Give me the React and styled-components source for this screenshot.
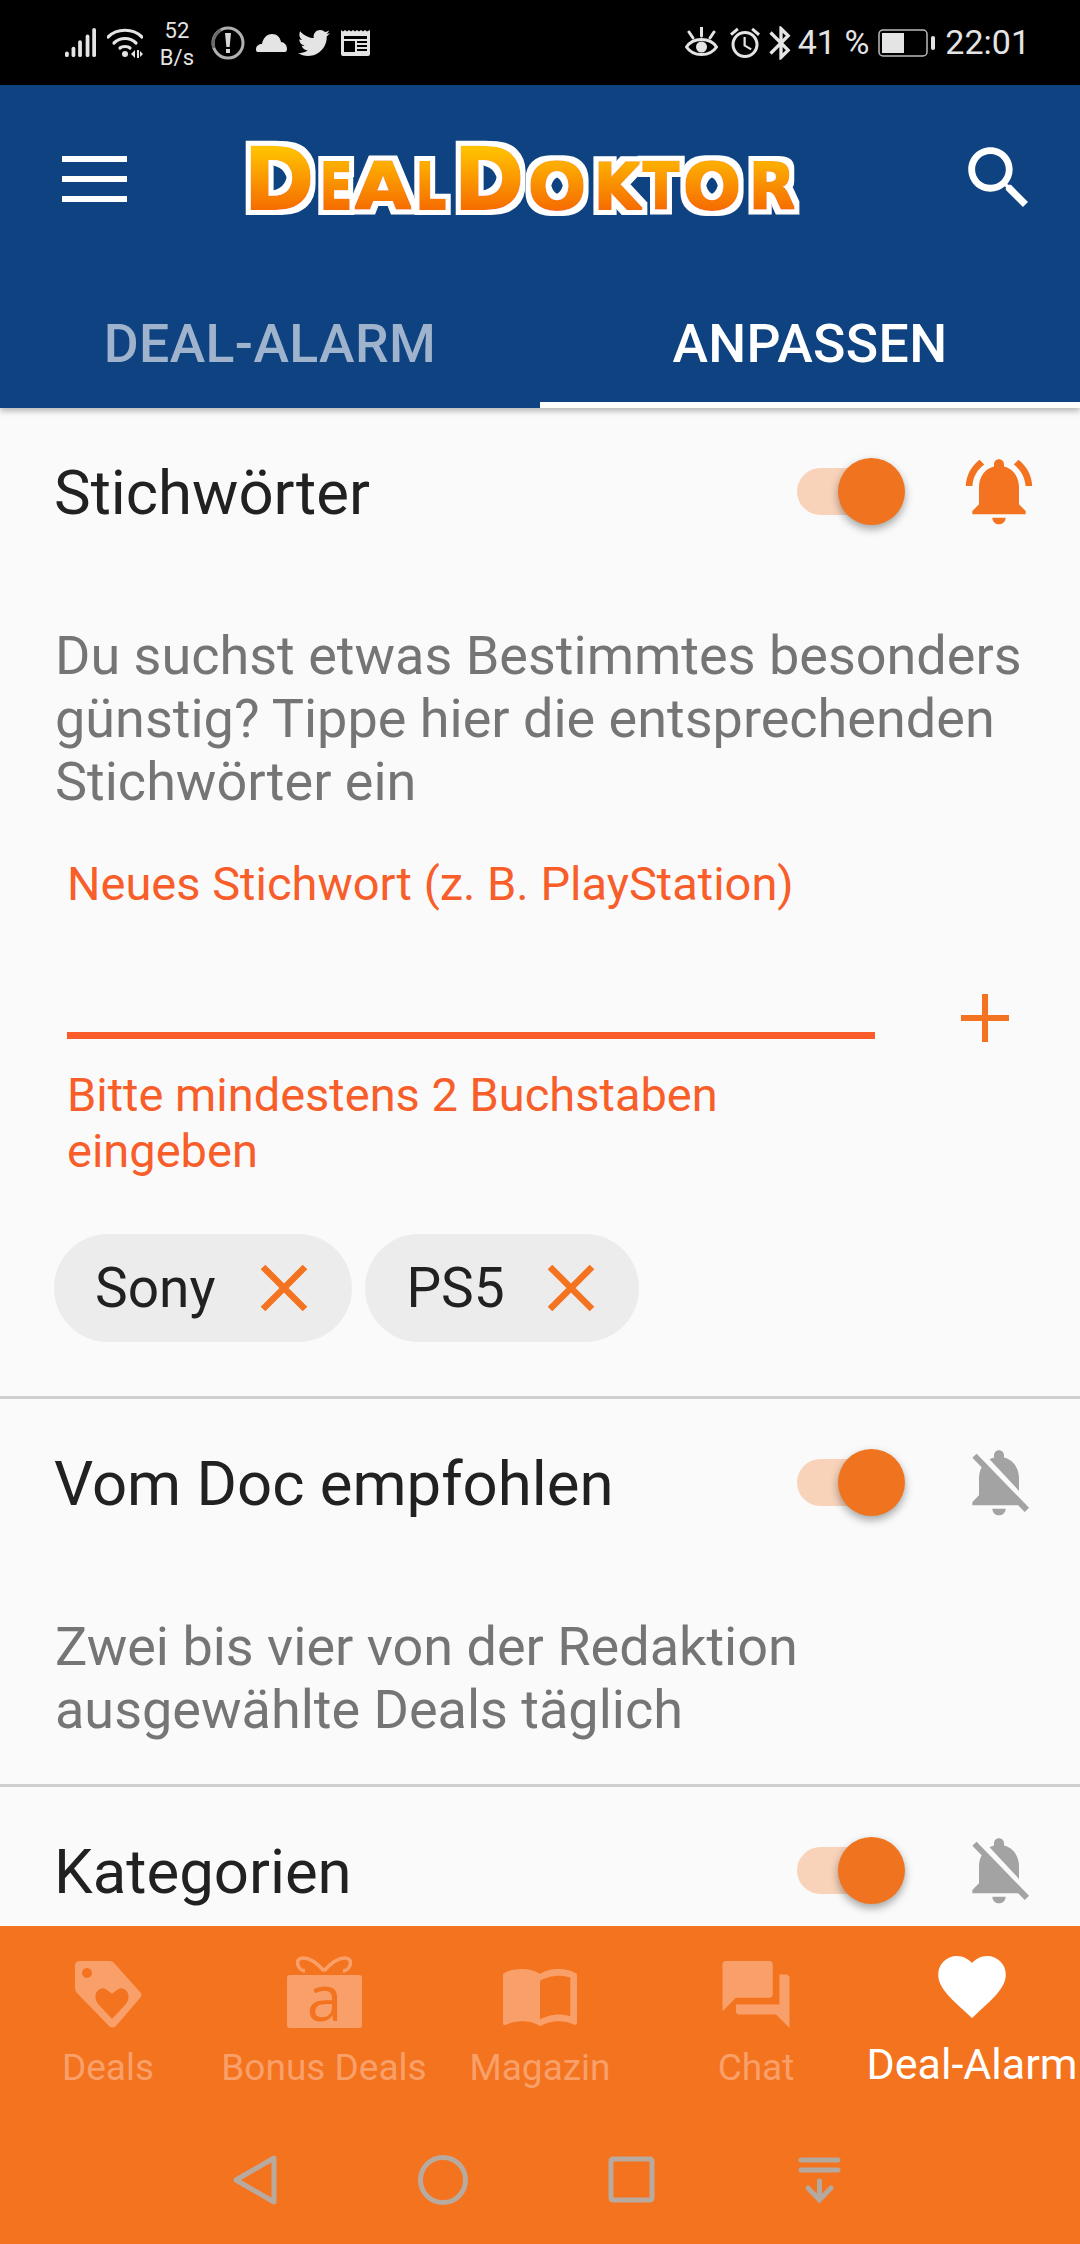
import React from 'react';
import styled, { createGlobalStyle } from 'styled-components';
import { MdAccessAlarm, MdBluetooth } from 'react-icons/md';
import { FaTwitter } from 'react-icons/fa';

const Global = createGlobalStyle`
  html, body { margin: 0; padding: 0; background: #fafafa; }
  body { font-family: Roboto, "Liberation Sans", sans-serif; }
  * { box-sizing: border-box; }
`;

const Phone = styled.div`
  width: 1080px; height: 2244px; display: flex; flex-direction: column; overflow: hidden; background: #fafafa;
`;
const StatusBar = styled.div`
  height: 85px; background: #000; color: #e4e4e4; display: flex; align-items: center; justify-content: space-between;
  padding: 0 50px 0 65px; flex: none;
`;
const StatusGroup = styled.div`
  display: flex; align-items: center; gap: ${p => p.$gap || 10}px; height: 85px;
  svg { display: block; flex: none; }
`;
const NetSpeed = styled.div`
  width: 46px; font-size: 22px; line-height: 27px; text-align: center; margin: 2px 0 0 0; letter-spacing: .2px;
`;
const StatusText = styled.span`
  font-size: 34px; line-height: 85px; white-space: nowrap; letter-spacing: ${p => p.$ls || 0}px;
`;
const BluetoothGlyph = styled(MdBluetooth)`
  margin: 0 -12px 0 -11px;
`;
const AppBar = styled.header`
  background: #0e4280; flex: none; height: 323px; display: flex; flex-direction: column;
  box-shadow: 0 3px 6px rgba(0,0,0,.28); position: relative; z-index: 2;
`;
const Toolbar = styled.div`
  height: 195px; display: flex; align-items: flex-start; padding: 71px 0 0 62px;
`;
const Burger = styled.div`
  width: 65px; height: 46px; display: flex; flex-direction: column; justify-content: space-between; flex: none;
  span { display: block; height: 6px; background: #fff; }
`;
const LogoSvg = styled.svg`
  display: block; width: 570px; height: 96px; margin: -26px 0 0 108px; flex: none;
`;
const SearchSvg = styled.svg`
  display: block; width: 82px; height: 82px; margin: -19px 0 0 153px; fill: #fff; flex: none;
`;
const Tabs = styled.div`
  flex: 1; display: grid; grid-template-columns: 1fr 1fr;
`;
const Tab = styled.div`
  display: flex; align-items: center; justify-content: center; padding: 4px 0 0;
  font-size: 53.5px; font-weight: 500; letter-spacing: .4px;
  color: ${p => p.$on ? '#fff' : '#9fb3cc'};
  border-bottom: 6px solid ${p => p.$on ? '#fff' : 'transparent'};
`;
const Content = styled.main`
  flex: 1; min-height: 0; overflow: hidden;
`;
const Section = styled.section`
  padding: 0 41px ${p => p.$pb || 0}px 55px;
  border-bottom: ${p => p.$last ? 'none' : '3px solid #cfcfcf'};
`;
const SectionHead = styled.div`
  height: 166px; display: flex; align-items: center;
`;
const Title = styled.h2`
  flex: 1; margin: 0 0 0 -1px; font-size: 61.7px; font-weight: 400; color: #212121; line-height: 68px; padding-top: 4px;
`;
const Switch = styled.div`
  position: relative; width: 108px; height: 67px; margin-right: 54px; flex: none;
  &::before { content: ''; position: absolute; left: 0; top: 10px; width: 100px; height: 47px; border-radius: 24px; background: #f8d3ba; }
  &::after { content: ''; position: absolute; right: 0; top: 0; width: 67px; height: 67px; border-radius: 50%; background: #f0741f;
    box-shadow: 0 4px 8px rgba(0,0,0,.35); }
`;
const BellSvg = styled.svg`
  width: 80px; height: 80px; flex: none; display: block; fill: ${p => p.$on ? '#f47320' : '#a3a3a3'};
`;
const Description = styled.p`
  margin: 50px 0 0; font-size: 54px; line-height: 63px; color: #757575; white-space: pre-line;
`;
const FormGrid = styled.div`
  display: grid; grid-template-columns: 808px 1fr; margin: 43px 0 0 12px;
`;
const FieldLabel = styled.div`
  font-size: 47px; line-height: 56px; color: #f85e2a;
`;
const Underline = styled.div`
  height: 127px; border-bottom: 7px solid #fb5b28;
`;
const FieldError = styled(FieldLabel)`
  margin-top: 28px;
`;
const PlusSvg = styled.svg`
  display: block; width: 48px; height: 48px; margin: 138px 0 0 86px;
`;
const Chips = styled.div`
  display: flex; gap: 13px; margin: 55px 0 0 -1px;
`;
const Chip = styled.div`
  height: 108px; border-radius: 54px; background: #ececec; display: flex; align-items: center;
  padding: 0 44px 0 41px; gap: ${p => p.$gap}px; font-size: 55px; color: #212121;
  svg { display: block; flex: none; }
`;
const BottomNav = styled.nav`
  flex: none; height: 318px; background: #f4731e; position: relative; z-index: 3;
`;
const NavTabs = styled.div`
  display: grid; grid-template-columns: repeat(5, 216px);
`;
const NavTab = styled.div`
  display: flex; flex-direction: column; align-items: center;
  color: ${p => p.$on ? '#fff' : '#f9a06a'};
  fill: currentColor;
`;
const IconSlot = styled.div`
  height: 102px; display: flex; align-items: flex-end; padding-bottom: ${p => p.$lift || 0}px;
  svg { display: block; }
`;
const NavLabel = styled.div`
  white-space: nowrap; line-height: 44px; font-size: ${p => p.$on ? 43 : 37}px; margin-top: ${p => p.$on ? 14 : 18}px;
`;
const SystemNav = styled.div`
  display: flex; gap: 138px; padding: 65px 0 0 230px;
  svg { display: block; flex: none; }
`;

const Bell = ({ on }) => (
  <BellSvg viewBox="0 0 24 24" $on={on}>
    {on
      ? <path d="M7.58 4.08L6.15 2.65C3.75 4.48 2.17 7.3 2.03 10.5h2c.15-2.65 1.51-4.97 3.55-6.42zm12.39 6.42h2c-.15-3.2-1.73-6.02-4.12-7.85l-1.42 1.43c2.02 1.45 3.39 3.77 3.54 6.42zM18 11c0-3.07-1.64-5.64-4.5-6.32V4c0-.83-.67-1.5-1.5-1.5s-1.5.67-1.5 1.5v.68C7.63 5.36 6 7.92 6 11v5l-2 2v1h16v-1l-2-2v-5zm-6 11c.14 0 .27-.01.4-.04.65-.14 1.18-.58 1.44-1.18.1-.24.15-.5.15-.78h-4c.01 1.1.9 2 2.01 2z" />
      : <path d="M20 18.69L7.84 6.14 5.27 3.49 4 4.76l2.8 2.8v.01c-.52.99-.8 2.16-.8 3.42v5l-2 2v1h13.73l2 2L21 19.72l-1-1.03zM12 22c1.11 0 2-.89 2-2h-4c0 1.11.89 2 2 2zm6-7.32V11c0-3.08-1.64-5.64-4.5-6.32V4c0-.83-.67-1.5-1.5-1.5s-1.5.67-1.5 1.5v.68c-.15.03-.29.08-.42.12-.1.03-.2.07-.3.11h-.01c-.2.08-.4.17-.59.27-.01 0-.01 0-.02.01L18 14.68z" />}
  </BellSvg>
);

const Cross = () => (
  <svg width="48" height="48" viewBox="0 0 48 48"><path d="M3 3L45 45M45 3L3 45" stroke="#f47320" strokeWidth="6.5" fill="none" /></svg>
);

const Signal = () => (
  <svg width="31" height="31" viewBox="0 0 33 31" fill="#e4e4e4">
    <rect x="0" y="25" width="4" height="6" rx="2" /><rect x="7" y="20" width="4" height="11" rx="2" /><rect x="14" y="13" width="4" height="18" rx="2" /><rect x="22" y="7" width="4" height="24" rx="2" /><rect x="29" y="0" width="4" height="31" rx="2" />
  </svg>
);
const Wifi = () => (
  <svg width="36" height="30" viewBox="0 0 36 30" fill="none" stroke="#e4e4e4" strokeWidth="3.2" strokeLinecap="round">
    <path d="M1 9C10 0 26 0 35 9" /><path d="M7 15C13 9 23 9 29 15" /><path d="M13 20C15 18 21 18 23 20" />
    <circle cx="18" cy="26" r="3" fill="#e4e4e4" stroke="none" />
    <path d="M28 22l-4 4 4 4zM30 22h2v8h-2zM33 23l3 3-3 3z" fill="#e4e4e4" stroke="none" />
  </svg>
);
const Alert = () => (
  <svg width="34" height="34" viewBox="0 0 34 34" fill="none">
    <circle cx="17" cy="17" r="15" stroke="#b0b0b0" strokeWidth="3" />
    <path d="M3 22A15 15 0 0 1 10 4" stroke="#6a6a6a" strokeWidth="3" />
    <path d="M14 7h6l-1.4 14h-3.2z" fill="#d8d8d8" /><rect x="15" y="23" width="4" height="4" fill="#d8d8d8" />
  </svg>
);
const Cloud = () => (
  <svg width="31" height="18" viewBox="0 0 31 18" fill="#e4e4e4">
    <path d="M2 18C0 18 0 16 0 15 0 12 3 10 6 10 7 4 11 0 16 0 21 0 24 3 25 8 28 8 31 11 31 15 31 17 30 18 29 18Z" />
  </svg>
);
const News = () => (
  <svg width="29" height="26" viewBox="0 0 29 26">
    <path d="M0 0l2 1.5L4 0l2 1.5L8 0l2 1.5L12 0l2 1.5L16 0l2 1.5L20 0l2 1.5L24 0l2 1.5L29 0v24q0 2-2 2H2q-2 0-2-2z" fill="#e4e4e4" />
    <path d="M3 6h23v3H3zM3 11h11v11H3zM16 11h10v2H16zM16 15h10v2H16zM16 19h10v2H16z" fill="#000" />
  </svg>
);
const Eye = () => (
  <svg width="33" height="31" viewBox="0 0 33 31" fill="none" stroke="#e4e4e4" strokeWidth="3">
    <path d="M1.5 20C8 10 25 10 31.500 20 25 30 8 30 1.500 20Z" />
    <circle cx="16.500" cy="20" r="5.500" fill="#e4e4e4" stroke="none" />
    <path d="M16.500 0v9M4 5l4 6M29 5l-4 6" strokeLinecap="round" />
  </svg>
);
const Battery = () => (
  <svg width="58" height="28" viewBox="0 0 58 28" fill="none">
    <rect x="1" y="1" width="48" height="26" rx="4" stroke="#bbb" strokeWidth="1.500" />
    <rect x="4" y="4" width="22" height="20" fill="#e4e4e4" />
    <rect x="53" y="7" width="4" height="14" rx="2" fill="#e4e4e4" />
  </svg>
);

const TagIcon = () => (
  <svg width="67" height="67" viewBox="0 0 67 67">
    <path fillRule="evenodd" d="M5 0H35Q37 0 39 2L65 31Q68 34 65 37L41 65Q37 68 34 65L2 32Q0 30 0 27V5Q0 0 5 0ZM12 7a5 5 0 1 0 .01 0ZM37 58L24 44C15 34 25 23 32 29L37 33L42 29C49 23 59 34 50 44Z" />
  </svg>
);
const GiftIcon = () => (
  <svg width="75" height="72" viewBox="0 0 75 72">
    <rect x="0" y="19" width="75" height="53" rx="3" />
    <path d="M37 15C31 8 24 2 16 2 7 2 10 14 18 15M37 15C43 8 50 2 58 2 67 2 64 14 56 15" fill="none" stroke="currentColor" strokeWidth="3.500" />
    <text x="37.500" y="65" textAnchor="middle" fontFamily="'Open Sans', sans-serif" fontWeight="400" fontSize="64" fill="#f4731e">a</text>
  </svg>
);
const BookIcon = () => (
  <svg width="74" height="57" viewBox="1 4.500 22 16.900" preserveAspectRatio="none">
    <path d="M21 5c-1.110-.35-2.330-.5-3.500-.5-1.950 0-4.050.4-5.500 1.500-1.450-1.100-3.550-1.500-5.500-1.500S2.450 4.900 1 6v14.650c0 .25.25.5.5.5.1 0 .15-.05.25-.05C3.100 20.450 5.050 20 6.500 20c1.950 0 4.050.4 5.500 1.500 1.350-.85 3.800-1.500 5.500-1.500 1.650 0 3.350.3 4.750 1.050.1.05.15.05.25.05.25 0 .5-.25.5-.5V6c-.6-.45-1.250-.75-2-1zm0 13.500c-1.100-.35-2.300-.5-3.500-.5-1.700 0-4.150.65-5.500 1.500V8c1.350-.85 3.800-1.500 5.500-1.500 1.200 0 2.400.15 3.500.5v11.500z" />
  </svg>
);
const ChatIcon = () => (
  <svg width="68" height="67" viewBox="2 2 20 20">
    <path d="M21 6h-2v9H6v2c0 .55.45 1 1 1h11l4 4V7c0-.55-.45-1-1-1zm-4 6V3c0-.55-.45-1-1-1H3c-.55 0-1 .45-1 1v14l4-4h10c.55 0 1-.45 1-1z" />
  </svg>
);
const HeartIcon = () => (
  <svg width="68" height="62" viewBox="2 3 20 18.350">
    <path d="M12 21.350l-1.450-1.320C5.400 15.360 2 12.280 2 8.500 2 5.420 4.420 3 7.500 3c1.740 0 3.410.81 4.500 2.090C13.090 3.810 14.760 3 16.500 3 19.580 3 22 5.420 22 8.500c0 3.780-3.400 6.860-8.550 11.540L12 21.350z" />
  </svg>
);

const logoLetters = [
  ['D', 247, 70, true], ['E', 323, 32, false], ['A', 358, 56, false], ['L', 419, 30, false],
  ['D', 457, 70, true], ['O', 531, 58, false], ['K', 597, 46, false], ['T', 646, 36, false], ['O', 686, 58, false], ['R', 752, 46, false],
];
const Logo = () => (
  <LogoSvg viewBox="0 0 570 96">
    <defs>
      <linearGradient id="logoGrad" gradientUnits="userSpaceOnUse" x1="0" y1="16" x2="0" y2="80">
        <stop offset="0" stopColor="#ffc400" /><stop offset="1" stopColor="#f56a00" />
      </linearGradient>
      <filter id="logoOutline" filterUnits="userSpaceOnUse" x="0" y="0" width="570" height="96">
        <feMorphology in="SourceAlpha" operator="dilate" radius="6" result="outer" />
        <feGaussianBlur in="outer" stdDeviation=".6" result="soft" />
        <feFlood floodColor="#fff" />
        <feComposite in2="soft" operator="in" result="white" />
        <feMorphology in="SourceGraphic" operator="dilate" radius="1" result="fat" />
        <feMerge><feMergeNode in="white" /><feMergeNode in="fat" /></feMerge>
      </filter>
    </defs>
    <g filter="url(#logoOutline)" fontFamily="'DejaVu Sans', sans-serif" fontWeight="700" fill="url(#logoGrad)">
      {logoLetters.map(([ch, x, w, big], i) => (
        <text key={i} x={x - 238} y={79} fontSize={big ? 86 : 64} textLength={w} lengthAdjust="spacingAndGlyphs">{ch}</text>
      ))}
    </g>
  </LogoSvg>
);

export default function App() {
  return (
    <Phone>
      <Global />
      <StatusBar>
        <StatusGroup $gap={11}>
          <Signal /><Wifi />
          <NetSpeed>52<br />B/s</NetSpeed>
          <Alert /><Cloud /><FaTwitter size={32} color="#e4e4e4" /><News />
        </StatusGroup>
        <StatusGroup $gap={9}>
          <Eye />
          <MdAccessAlarm size={36} color="#e4e4e4" />
          <BluetoothGlyph size={40} color="#e4e4e4" />
          <StatusText>41 %</StatusText>
          <Battery />
          <StatusText>22:01</StatusText>
        </StatusGroup>
      </StatusBar>
      <AppBar>
        <Toolbar>
          <Burger><span /><span /><span /></Burger>
          <Logo />
          <SearchSvg viewBox="0 0 24 24"><path d="M15.500 14h-.79l-.28-.27C15.410 12.590 16 11.110 16 9.500 16 5.910 13.090 3 9.500 3S3 5.910 3 9.500 5.910 16 9.500 16c1.610 0 3.090-.59 4.230-1.570l.27.28v.79l5 4.990L20.490 19l-4.990-5zm-6 0C7.010 14 5 11.990 5 9.500S7.010 5 9.500 5 14 7.010 14 9.500 11.990 14 9.500 14z" /></SearchSvg>
        </Toolbar>
        <Tabs>
          <Tab>DEAL-ALARM</Tab>
          <Tab $on>ANPASSEN</Tab>
        </Tabs>
      </AppBar>
      <Content>
        <Section $pb={54}>
          <SectionHead><Title>Stichwörter</Title><Switch /><Bell on /></SectionHead>
          <Description>{'Du suchst etwas Bestimmtes besonders\ngünstig? Tippe hier die entsprechenden\nStichwörter ein'}</Description>
          <FormGrid>
            <div>
              <FieldLabel>Neues Stichwort (z. B. PlayStation)</FieldLabel>
              <Underline />
              <FieldError>Bitte mindestens 2 Buchstaben eingeben</FieldError>
            </div>
            <PlusSvg viewBox="0 0 48 48"><path d="M24 0V48M0 24H48" stroke="#f47320" strokeWidth="6" fill="none" /></PlusSvg>
          </FormGrid>
          <Chips>
            <Chip $gap={45}>Sony<Cross /></Chip>
            <Chip $gap={42}>PS5<Cross /></Chip>
          </Chips>
        </Section>
        <Section $pb={43}>
          <SectionHead><Title>Vom Doc empfohlen</Title><Switch /><Bell /></SectionHead>
          <Description>{'Zwei bis vier von der Redaktion\nausgewählte Deals täglich'}</Description>
        </Section>
        <Section $last>
          <SectionHead><Title>Kategorien</Title><Switch /><Bell /></SectionHead>
        </Section>
      </Content>
      <BottomNav>
        <NavTabs>
          <NavTab><IconSlot><TagIcon /></IconSlot><NavLabel>Deals</NavLabel></NavTab>
          <NavTab><IconSlot><GiftIcon /></IconSlot><NavLabel>Bonus Deals</NavLabel></NavTab>
          <NavTab><IconSlot $lift={2}><BookIcon /></IconSlot><NavLabel>Magazin</NavLabel></NavTab>
          <NavTab><IconSlot><ChatIcon /></IconSlot><NavLabel>Chat</NavLabel></NavTab>
          <NavTab $on><IconSlot $lift={10}><HeartIcon /></IconSlot><NavLabel $on>Deal-Alarm</NavLabel></NavTab>
        </NavTabs>
        <SystemNav>
          <svg width="50" height="50" viewBox="0 0 50 50" fill="none" stroke="#b8aa9f" strokeWidth="5" strokeLinejoin="round"><path d="M6 25L44 3V47Z" /></svg>
          <svg width="50" height="50" viewBox="0 0 50 50" fill="none" stroke="#b8aa9f" strokeWidth="5"><circle cx="25" cy="25" r="22.500" /></svg>
          <svg width="50" height="50" viewBox="0 0 50 50" fill="none" stroke="#b8aa9f" strokeWidth="5" strokeLinejoin="round"><rect x="5" y="4" width="41" height="41" rx="2" /></svg>
          <svg width="50" height="50" viewBox="0 0 50 50" fill="none" stroke="#b4a99f" strokeWidth="5" strokeLinecap="round"><path d="M7 5H44M7 15H44M25.500 26V44M14 33L25.500 45L37 33" /></svg>
        </SystemNav>
      </BottomNav>
    </Phone>
  );
}
